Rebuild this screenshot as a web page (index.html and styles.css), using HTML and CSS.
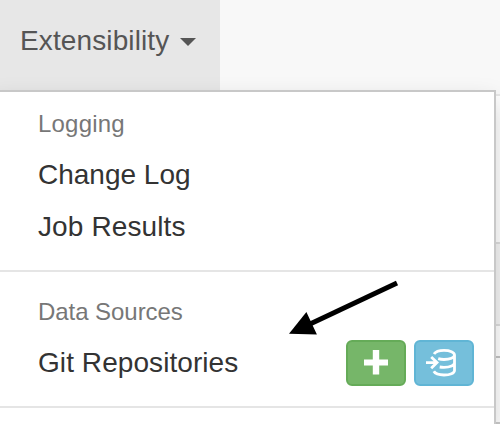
FILE: index.html
```html
<!DOCTYPE html>
<html lang="en">
<head>
<meta charset="utf-8">
<title>Extensibility</title>
<link rel="stylesheet" href="styles.css">
</head>
<body>
<nav class="navbar">
  <div class="tab"><span class="tab-label">Extensibility</span><span class="caret"></span>
    <div class="menu">
      <div class="header logging">Logging</div>
      <div class="item change">Change Log</div>
      <div class="item jobs">Job Results</div>
      <div class="divider"></div>
      <div class="header sources">Data Sources</div>
      <div class="item git"><span>Git Repositories</span>
        <div class="buttons">
          <span class="btn add"><svg width="56" height="42" viewBox="348 342 56 42"><path d="M372.8 350h6.4v9.6h8.8v6h-8.8v8.9h-6.4v-8.9H364v-6h8.8z" fill="#fff"/></svg></span>
          <span class="btn sync"><svg width="56" height="42" viewBox="416 342 56 42" fill="none" stroke="#fff" stroke-width="2.8"><path d="M434 354C435.500 351.700 439 350.400 444 350.400c6 0 10.500 2 10.500 4.600s-4.500 4.500-10.500 4.500c-2.200 0-4.200-.3-5.800-.8M454.500 355v15.400c0 2.600-4.500 4.600-10.500 4.600-5 0-8.800-1.300-10.200-3.700M454.500 362.700c0 2.700-4.300 4.600-10.500 4.600-1.600 0-3-.1-4.300-.3"/><path d="M426 362.600h11M431.200 357l5.800 5.600-5.800 5.600"/></svg></span>
        </div>
      </div>
      <div class="divider"></div>
    </div>
  </div>
</nav>
<main class="page">
  <div class="row intro"></div>
  <div class="row head"></div>
  <div class="row filter"></div>
  <div class="row body"></div>
</main>
<svg class="arrow" width="120" height="64" viewBox="284 276 120 64"><path d="M397 283L309 324.500" stroke="#000" stroke-width="5"/><path d="M289 333.700L306.400 312l10.500 22.600z"/></svg>
</body>
</html>
```
FILE: styles.css
```css
* { box-sizing: border-box; }
body {
  margin: 0;
  height: 424px;
  overflow: hidden;
  background: #fff;
  font-family: "Liberation Sans", Arial, sans-serif;
  font-size: 28px;
  line-height: 40px;
}
.navbar {
  height: 96px;
  background: #f8f8f8;
  border-bottom: 2px solid #e7e7e7;
}
.tab {
  position: relative;
  display: flex;
  width: 220px;
  height: 90px;
  padding: 21px 0 0 20px;
  background: #e7e7e7;
  color: #555;
}
.tab-label { width: 149px; letter-spacing: 0.12px; white-space: nowrap; }
.caret {
  width: 16px;
  height: 8px;
  margin: 17px 0 0 11px;
  border: 8px solid transparent;
  border-top-color: #555;
  border-bottom: 0;
}
.menu {
  position: absolute;
  top: 90px;
  left: -10px;
  width: 506px;
  height: 334px;
  padding: 10px 0 0;
  background: #fff;
  border: 2px solid #c8c8c8;
  border-bottom: 0;
  box-shadow: 0 12px 24px rgba(0, 0, 0, .175);
}
.menu .divider:last-child { margin-bottom: 0; }
.header {
  height: 46px;
  padding: 5px 46px 7px;
  font-size: 24px;
  line-height: 34px;
  color: #777;
}
.logging { letter-spacing: 0.2px; }
.sources { letter-spacing: -0.05px; }
.item {
  height: 52px;
  padding: 7px 46px 5px;
  color: #333;
  white-space: nowrap;
}
.jobs { letter-spacing: 0.12px; }
.git {
  display: flex;
  justify-content: space-between;
  padding-right: 20px;
  letter-spacing: 0.07px;
}
.buttons { display: flex; gap: 8px; margin-top: -3px; }
.btn {
  width: 60px;
  height: 46px;
  border: 2px solid;
  border-radius: 6px;
}
.btn svg { display: block; }
.add { background: #76b669; border-color: #65ab58; }
.sync { background: #75bfdb; border-color: #60b5d5; }
.divider { height: 2px; margin: 18px 0; background: #e5e5e5; }
.row { border-bottom: 2px solid #ddd; }
.intro { height: 148px; }
.head { height: 82px; background: #f5f5f5; }
.filter { height: 32px; border-bottom-color: #c4c4c4; }
.body { height: 66px; border-bottom-color: #ccc; }
.arrow { position: absolute; left: 284px; top: 276px; }
```
